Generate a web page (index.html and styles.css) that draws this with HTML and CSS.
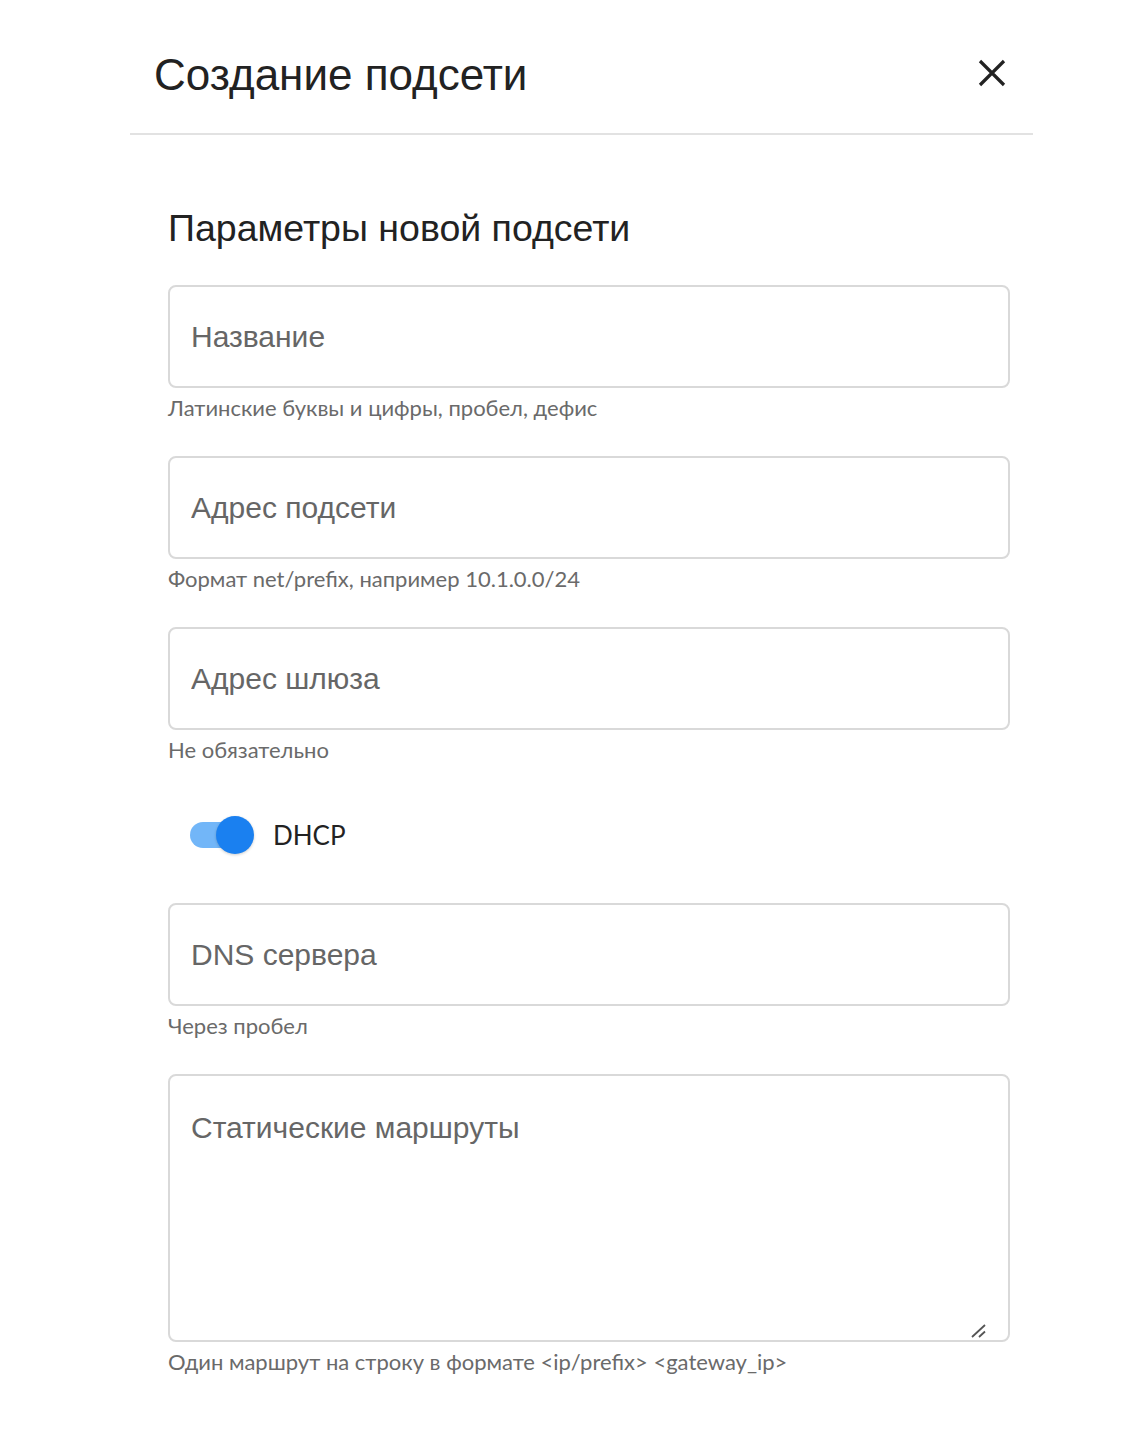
FILE: index.html
```html
<!DOCTYPE html>
<html lang="ru">
<head>
<meta charset="utf-8">
<title>Создание подсети</title>
<link rel="stylesheet" href="styles.css">
</head>
<body>
<div class="dialog">
  <div class="header">
    <h1 class="title">Создание подсети</h1>
    <button class="close" aria-label="Закрыть">
      <svg width="28" height="28" viewBox="0 0 28 28"><path d="M2 2 L26 26 M26 2 L2 26" stroke="#222" stroke-width="3.2" stroke-linecap="butt"/></svg>
    </button>
  </div>
  <div class="body">
    <h2 class="section-title">Параметры новой подсети</h2>
    <div class="form">
      <div class="field">
        <input class="input" type="text" placeholder="Название">
        <div class="helper">Латинские буквы и цифры, пробел, дефис</div>
      </div>
      <div class="field">
        <input class="input" type="text" placeholder="Адрес подсети">
        <div class="helper">Формат net/prefix, например 10.1.0.0/24</div>
      </div>
      <div class="field">
        <input class="input" type="text" placeholder="Адрес шлюза">
        <div class="helper">Не обязательно</div>
      </div>
      <div class="toggle-row">
        <span class="switch">
          <span class="track"></span>
          <span class="knob"></span>
        </span>
        <span class="toggle-label">DHCP</span>
      </div>
      <div class="field">
        <input class="input" type="text" placeholder="DNS сервера">
        <div class="helper">Через пробел</div>
      </div>
      <div class="field">
        <div class="textarea-wrap">
          <textarea class="input textarea" placeholder="Статические маршруты"></textarea>
          <svg class="grip" width="16" height="14" viewBox="0 0 16 14"><path d="M1 13 L14 1 M8 13 L14 7.5" stroke="#555" stroke-width="1.8" fill="none"/></svg>
        </div>
        <div class="helper">Один маршрут на строку в формате &lt;ip/prefix&gt; &lt;gateway_ip&gt;</div>
      </div>
    </div>
  </div>
</div>
</body>
</html>
```
FILE: styles.css
```css
* { box-sizing: border-box; }
html, body { margin: 0; padding: 0; background: #fff; }
body { font-family: "Liberation Sans", Arial, sans-serif; color: #222; }

.dialog {
  margin-left: 130px;
  width: 903px;
}

.header {
  height: 135px;
  border-bottom: 2px solid #e2e2e2;
  padding: 49px 24px 0 24px;
  display: flex;
  justify-content: space-between;
  align-items: flex-start;
}

.title {
  margin: 0;
  font-size: 44px;
  line-height: 52px;
  font-weight: 400;
  color: #222;
}

.close {
  border: 0;
  background: transparent;
  padding: 0;
  margin: 10px 3px 0 0;
  width: 28px;
  height: 28px;
  cursor: pointer;
}
.close svg { display: block; }

.body {
  padding: 71px 23px 40px 38px;
}

.section-title {
  margin: 0;
  font-size: 37.5px;
  line-height: 44px;
  font-weight: 400;
  color: #222;
}

.form {
  margin-top: 35px;
  display: flex;
  flex-direction: column;
  gap: 36px;
}

.field { display: flex; flex-direction: column; }

.input {
  display: block;
  width: 100%;
  height: 103px;
  border: 2px solid #d9d9d9;
  border-radius: 8px;
  padding: 0 21px;
  font-family: "Liberation Sans", Arial, sans-serif;
  font-size: 30px;
  color: #222;
  background: #fff;
  outline: none;
}
.input::placeholder { color: #666; opacity: 1; }

.textarea-wrap { position: relative; }

.textarea {
  height: 268px;
  padding: 34px 21px;
  line-height: 36px;
  resize: none;
}

.grip {
  position: absolute;
  right: 23px;
  bottom: 4px;
  display: block;
}

.helper {
  margin-top: 8px;
  font-family: Lato, "Liberation Sans", sans-serif;
  font-size: 22px;
  line-height: 24px;
  color: #6a6a6a;
}

.toggle-row {
  display: flex;
  align-items: center;
  padding: 17px 0 12px 22px;
  height: 69px;
}

.switch {
  position: relative;
  width: 64px;
  height: 40px;
  flex: none;
}
.track {
  position: absolute;
  left: 0;
  top: 7px;
  width: 60px;
  height: 26px;
  border-radius: 13px;
  background: #72b6f8;
}
.knob {
  position: absolute;
  left: 26px;
  top: 1px;
  width: 38px;
  height: 38px;
  border-radius: 50%;
  background: #1a80f0;
  box-shadow: 0 1px 3px rgba(0,0,0,0.2);
}

.toggle-label {
  margin-left: 19px;
  font-family: Lato, "Liberation Sans", sans-serif;
  font-size: 26px;
  color: #222;
}
```
